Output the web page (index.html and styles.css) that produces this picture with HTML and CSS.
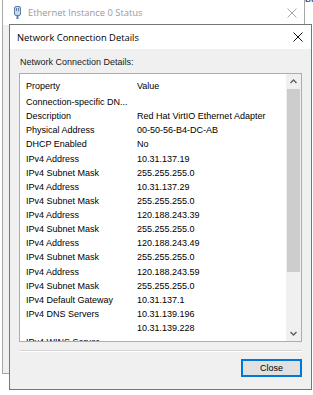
FILE: index.html
```html
<!DOCTYPE html>
<html>
<head>
<meta charset="utf-8">
<link rel="stylesheet" href="styles.css">
</head>
<body>
<div class="desktop">
  <span class="behind">bn</span>
  <div class="win-back">
    <div class="back-title">
      <svg class="back-icon" width="7" height="13" viewBox="0 0 7 13">
        <rect x="0.5" y="0.5" width="6" height="9" rx="1.5" fill="#c9d6e6" stroke="#5f7fa6"/>
        <rect x="2" y="2" width="1" height="3" fill="#5f7fa6"/>
        <rect x="4" y="2" width="1" height="3" fill="#5f7fa6"/>
        <rect x="2.5" y="10" width="2" height="3" fill="#5f7fa6"/>
      </svg>
      <span class="back-title-text">Ethernet Instance 0 Status</span>
      <svg class="back-close" width="10" height="10" viewBox="0 0 10 10">
        <path d="M0.5 0.5L9.5 9.5M9.5 0.5L0.5 9.5" stroke="#a8a8a8" stroke-width="1"/>
      </svg>
    </div>
    <div class="back-body"></div>
  </div>

  <div class="dialog">
    <div class="dlg-title">
      <span class="dlg-title-text">Network Connection Details</span>
      <svg class="dlg-close" width="10" height="10" viewBox="0 0 10 10">
        <path d="M0.5 0.5L9.5 9.5M9.5 0.5L0.5 9.5" stroke="#111" stroke-width="1"/>
      </svg>
    </div>
    <div class="dlg-body">
      <div class="label">Network Connection Details:</div>
      <div class="listbox">
        <div class="list-content">
          <div class="row header"><span class="prop">Property</span><span class="val">Value</span></div>
          <div class="row"><span class="prop">Connection-specific DN...</span><span class="val"></span></div>
          <div class="row"><span class="prop">Description</span><span class="val">Red Hat VirtIO Ethernet Adapter</span></div>
          <div class="row"><span class="prop">Physical Address</span><span class="val">00-50-56-B4-DC-AB</span></div>
          <div class="row"><span class="prop">DHCP Enabled</span><span class="val">No</span></div>
          <div class="row"><span class="prop">IPv4 Address</span><span class="val">10.31.137.19</span></div>
          <div class="row"><span class="prop">IPv4 Subnet Mask</span><span class="val">255.255.255.0</span></div>
          <div class="row"><span class="prop">IPv4 Address</span><span class="val">10.31.137.29</span></div>
          <div class="row"><span class="prop">IPv4 Subnet Mask</span><span class="val">255.255.255.0</span></div>
          <div class="row"><span class="prop">IPv4 Address</span><span class="val">120.188.243.39</span></div>
          <div class="row"><span class="prop">IPv4 Subnet Mask</span><span class="val">255.255.255.0</span></div>
          <div class="row"><span class="prop">IPv4 Address</span><span class="val">120.188.243.49</span></div>
          <div class="row"><span class="prop">IPv4 Subnet Mask</span><span class="val">255.255.255.0</span></div>
          <div class="row"><span class="prop">IPv4 Address</span><span class="val">120.188.243.59</span></div>
          <div class="row"><span class="prop">IPv4 Subnet Mask</span><span class="val">255.255.255.0</span></div>
          <div class="row"><span class="prop">IPv4 Default Gateway</span><span class="val">10.31.137.1</span></div>
          <div class="row"><span class="prop">IPv4 DNS Servers</span><span class="val">10.31.139.196</span></div>
          <div class="row"><span class="prop"></span><span class="val">10.31.139.228</span></div>
          <div class="row"><span class="prop">IPv4 WINS Server</span><span class="val"></span></div>
        </div>
        <div class="scrollbar">
          <div class="sb-btn">
            <svg width="7" height="5" viewBox="0 0 7 5"><path d="M0.5 4L3.5 1L6.5 4" fill="none" stroke="#606060" stroke-width="1.4"/></svg>
          </div>
          <div class="sb-track">
            <div class="sb-thumb"></div>
          </div>
          <div class="sb-btn">
            <svg width="7" height="5" viewBox="0 0 7 5"><path d="M0.5 1L3.5 4L6.5 1" fill="none" stroke="#606060" stroke-width="1.4"/></svg>
          </div>
        </div>
      </div>
      <div class="separator"></div>
      <div class="buttons">
        <button class="btn">Close</button>
      </div>
    </div>
  </div>
</div>
</body>
</html>
```
FILE: styles.css
```css
html, body {
  margin: 0;
  padding: 0;
  background: #ffffff;
}
body {
  width: 313px;
  height: 395px;
  overflow: hidden;
  font-family: "Liberation Sans", Arial, sans-serif;
  font-size: 9px;
  color: #000;
}
.desktop {
  position: relative;
  width: 313px;
  height: 395px;
  overflow: hidden;
}
.behind {
  position: absolute;
  left: 305px;
  top: -8px;
  font-size: 11px;
  color: #333;
}
.win-back {
  position: absolute;
  left: 2px;
  top: -1px;
  width: 303px;
  height: 375px;
  box-sizing: border-box;
  border: 1px solid #a6a6a6;
  display: flex;
  flex-direction: column;
  background: #f0f0f0;
}
.back-title {
  height: 25px;
  background: #ffffff;
  display: flex;
  align-items: center;
  flex-shrink: 0;
}
.back-icon {
  margin-left: 11px;
  margin-top: -1px;
}
.back-title-text {
  margin-left: 7px;
  font-family: "Open Sans", "Noto Sans", sans-serif;
  font-size: 9.4px;
  color: #9a9a9a;
  flex: 1;
}
.back-close {
  margin-right: 7px;
}
.back-body {
  flex: 1;
}
.dialog {
  position: absolute;
  left: 9px;
  top: 24px;
  width: 303px;
  height: 366px;
  box-sizing: border-box;
  border: 1px solid #767676;
  background: #f0f0f0;
  display: flex;
  flex-direction: column;
}
.dlg-title {
  height: 24px;
  background: #ffffff;
  display: flex;
  align-items: center;
  flex-shrink: 0;
}
.dlg-title-text {
  margin-left: 7px;
  font-family: "Open Sans", "Noto Sans", sans-serif;
  font-size: 9.4px;
  color: #000;
  flex: 1;
}
.dlg-close {
  margin-right: 8px;
}
.dlg-body {
  flex: 1;
  display: flex;
  flex-direction: column;
  padding: 8px 9px 0 9px;
}
.label {
  height: 11px;
  line-height: 11px;
  padding-left: 1px;
  margin-bottom: 5px;
  color: #1a1a1a;
}
.listbox {
  height: 269px;
  box-sizing: border-box;
  border: 1px solid #adadad;
  background: #ffffff;
  display: flex;
  overflow: hidden;
}
.list-content {
  flex: 1;
  overflow: hidden;
}
.row {
  display: flex;
  height: 14.125px;
  line-height: 14px;
  white-space: nowrap;
}
.row.header {
  height: 21px;
  padding-top: 5px;
  box-sizing: border-box;
}
.prop {
  width: 117px;
  padding-left: 6px;
  box-sizing: border-box;
  flex-shrink: 0;
  overflow: hidden;
}
.val {
  flex: 1;
}
.scrollbar {
  width: 15px;
  background: #f0f0f0;
  display: flex;
  flex-direction: column;
  flex-shrink: 0;
}
.sb-btn {
  height: 15px;
  display: flex;
  align-items: center;
  justify-content: center;
  flex-shrink: 0;
}
.sb-track {
  flex: 1;
  padding: 0 1px;
}
.sb-thumb {
  height: 183px;
  background: #cdcdcd;
}
.separator {
  margin-top: 8px;
  height: 1px;
  background: #d6d6d6;
  border-bottom: 1px solid #ffffff;
}
.buttons {
  display: flex;
  justify-content: flex-end;
  margin-top: 7px;
}
.btn {
  width: 61px;
  height: 18px;
  box-sizing: border-box;
  border: 1px solid #0078d7;
  box-shadow: inset 0 0 0 1px #0078d7;
  background: #e1e1e1;
  font-family: "Liberation Sans", Arial, sans-serif;
  font-size: 9px;
  color: #000;
  padding: 0;
  margin: 0;
}
```
